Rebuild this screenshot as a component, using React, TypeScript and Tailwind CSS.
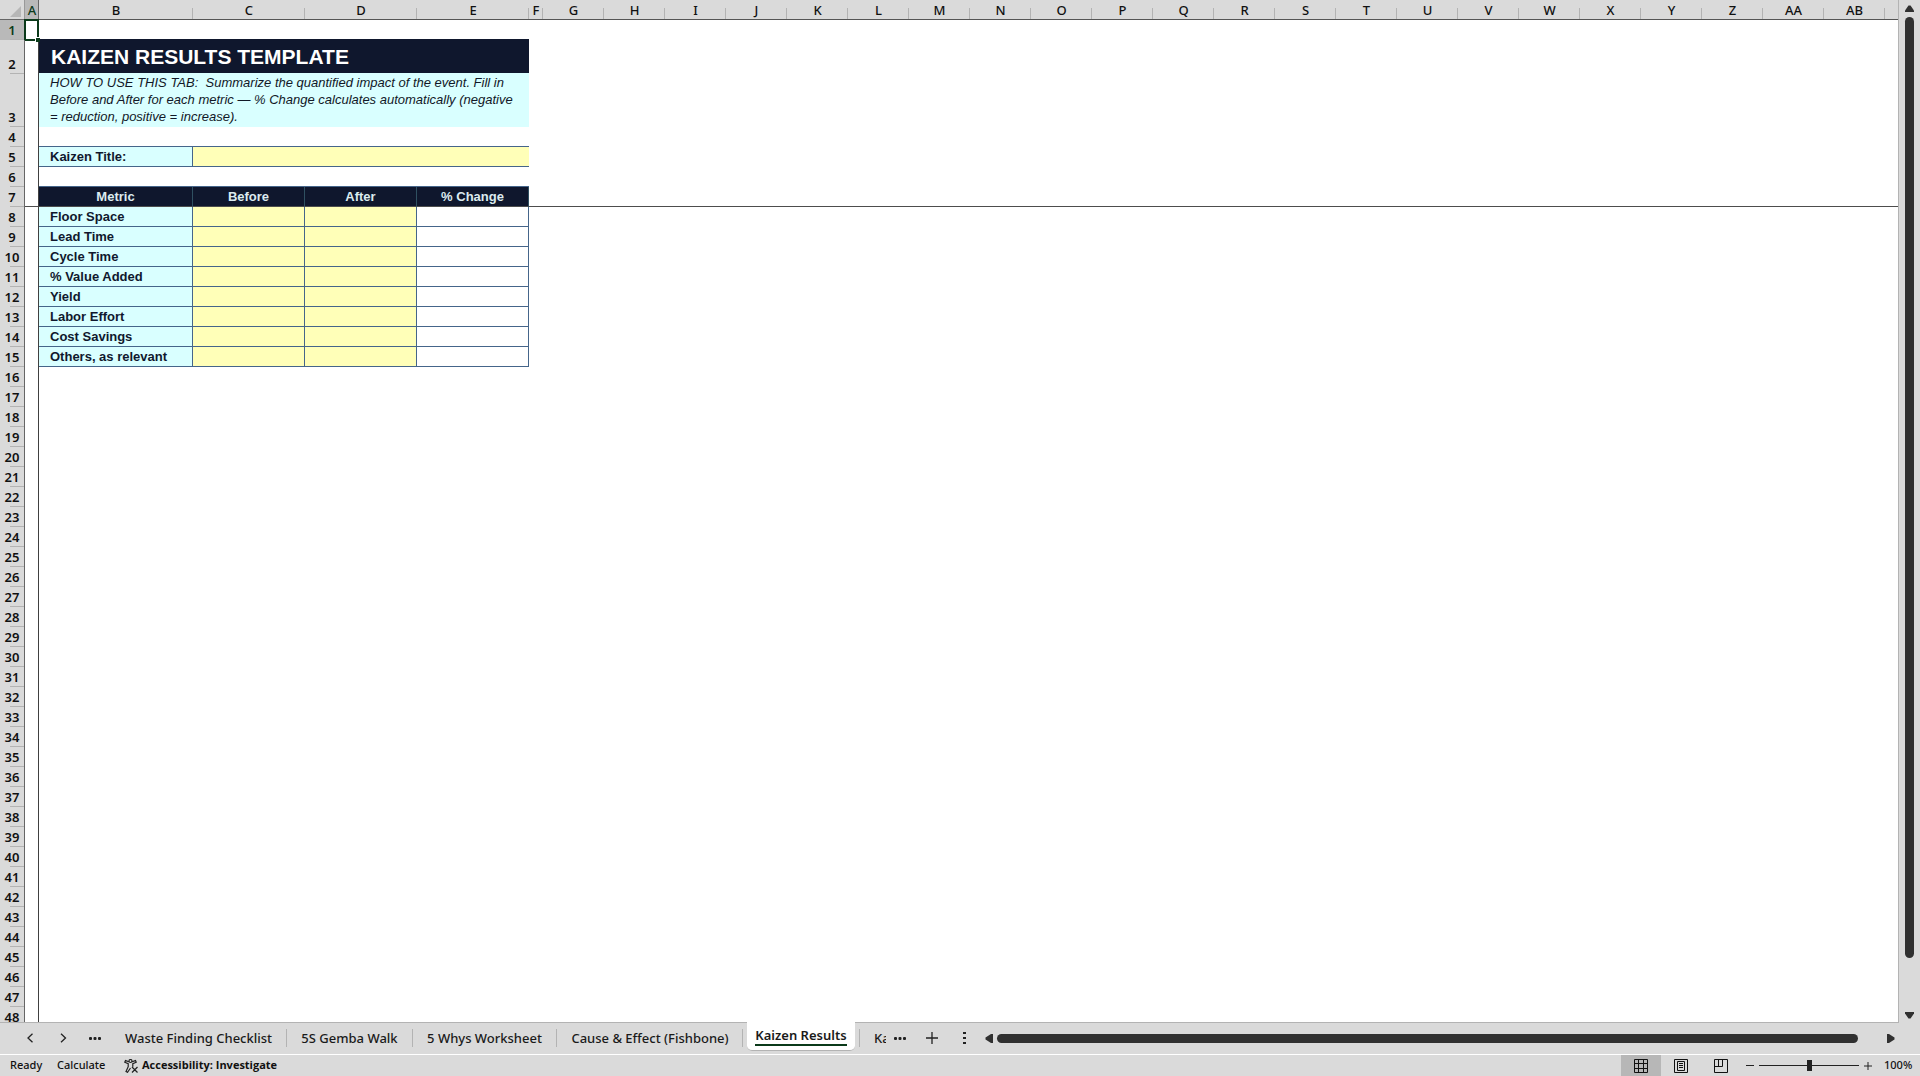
import React from 'react';

const LETTERS = ['A','B','C','D','E','F','G','H','I','J','K','L','M','N','O','P','Q','R','S','T','U','V','W','X','Y','Z','AA','AB'];
const METRICS = ['Floor Space','Lead Time','Cycle Time','% Value Added','Yield','Labor Effort','Cost Savings','Others, as relevant'];
const LINE = 'border-[#45658a]';

function colWidth(i: number) {
  if (i === 0) return 'w-[14px]';
  if (i === 1) return 'w-[154px]';
  if (i < 5) return 'w-[112px]';
  if (i === 5) return 'w-[14px]';
  return 'w-[61px]';
}

function rowHeight(n: number) {
  if (n === 2) return 'h-[34px]';
  if (n === 3) return 'h-[53px]';
  return 'h-5';
}

function RowHeader({ n }: { n: number }) {
  return (
    <th
      scope="row"
      className={`relative border-r border-[#666] p-0 align-bottom text-center text-[13px] leading-5 font-semibold ${n === 1 ? 'bg-[#b9b9b9] text-[#0b3a1a]' : 'bg-[#dadada] text-[#111]'}`}
    >
      {n}
      <span className="absolute right-0 bottom-0 h-px w-3.5 bg-[#b3b3b3]" />
    </th>
  );
}

function Entry({ label }: { label: string }) {
  return <input type="text" aria-label={label} className="block h-[19px] w-full bg-transparent px-1 text-[13px] outline-none" />;
}

function cells(n: number) {
  const label = `border-b ${LINE} bg-[#d9ffff] p-0 pl-[11px] text-left font-['Liberation_Sans',sans-serif] text-[13px] leading-[18px] font-bold text-[#10182e]`;
  if (n === 1) {
    return (
      <>
        <td colSpan={4} className="border-b border-[#0f172d] p-0" />
        <td colSpan={24} />
      </>
    );
  }
  if (n === 2) {
    return (
      <>
        <td colSpan={4} className="border-b border-[#d9ffff] bg-[#0f172d] p-0 pl-3 align-middle font-['Liberation_Sans',sans-serif] text-[21px] leading-6 font-bold text-white">
          KAIZEN RESULTS TEMPLATE
        </td>
        <td colSpan={24} />
      </>
    );
  }
  if (n === 3) {
    return (
      <>
        <td colSpan={4} className="bg-[#d9ffff] p-0 pl-[11px] align-top font-['Liberation_Sans',sans-serif] text-[13px] leading-[17px] whitespace-pre text-[#111827] italic">
          {'HOW TO USE THIS TAB:  Summarize the quantified impact of the event. Fill in\nBefore and After for each metric — % Change calculates automatically (negative\n= reduction, positive = increase).'}
        </td>
        <td colSpan={24} />
      </>
    );
  }
  if (n === 4 || n === 6) {
    return (
      <>
        <td colSpan={4} className={`border-b ${LINE} p-0`} />
        <td colSpan={24} />
      </>
    );
  }
  if (n === 5) {
    return (
      <>
        <th scope="row" className={`${label} border-r`}>Kaizen Title:</th>
        <td colSpan={3} className={`border-b ${LINE} bg-[#ffffb8] p-0`}><Entry label="Kaizen Title" /></td>
        <td colSpan={24} />
      </>
    );
  }
  if (n === 7) {
    return (
      <>
        {['Metric', 'Before', 'After', '% Change'].map((h) => (
          <th key={h} scope="col" className="border-r border-b border-r-[#2f5061] border-b-[#4d4d4d] bg-[#0f172d] p-0 text-center font-['Liberation_Sans',sans-serif] text-[13px] leading-[18px] font-bold text-[#dcebf0]">
            {h}
          </th>
        ))}
        <td colSpan={24} className="border-b border-[#4d4d4d] p-0" />
      </>
    );
  }
  if (n >= 8 && n <= 15) {
    const m = METRICS[n - 8];
    return (
      <>
        <th scope="row" className={`${label} border-r`}>{m}</th>
        <td className={`border-r border-b ${LINE} bg-[#ffffb8] p-0`}><Entry label={`${m} before`} /></td>
        <td className={`border-r border-b ${LINE} bg-[#ffffb8] p-0`}><Entry label={`${m} after`} /></td>
        <td className={`border-r border-b ${LINE} p-0`} />
        <td colSpan={24} />
      </>
    );
  }
  return <td colSpan={28} />;
}

function Sheet() {
  return (
    <div className="min-w-0 flex-1 overflow-hidden border-r border-b border-[#b3b3b3] bg-white">
      <table className="w-full table-fixed border-separate border-spacing-0">
        <colgroup>
          <col className="w-[25px]" />
          {LETTERS.map((l, i) => <col key={l} className={colWidth(i)} />)}
          <col />
        </colgroup>
        <thead>
          <tr className="h-5">
            <th className="border-r border-b border-[#666] border-r-[#999] bg-[#dadada] p-0">
              <svg viewBox="0 0 24 18" className="block h-[18px] w-6" aria-hidden="true"><path d="M21 5v11H10z" fill="#b7b7b7" /></svg>
            </th>
            {LETTERS.map((l, i) => (
              <th
                key={l}
                scope="col"
                className={`relative border-b border-[#555] p-0 pt-px text-center text-[13px] leading-[18px] font-medium ${i === 0 ? 'bg-[#b9b9b9] text-[#0b3a1a]' : 'bg-[#dadada] text-[#111]'}`}
              >
                {l}
                <span className={`absolute right-0 bottom-0 w-px ${i === 0 ? 'h-[19px] bg-[#666]' : 'h-[11px] bg-[#b3b3b3]'}`} />
              </th>
            ))}
            <th className="border-b border-[#555] bg-[#dadada] p-0" />
          </tr>
        </thead>
        <tbody>
          {Array.from({ length: 48 }, (_, k) => k + 1).map((n) => (
            <tr key={n} className={rowHeight(n)}>
              <RowHeader n={n} />
              <td className={`relative border-r border-[#404040] p-0 ${n === 7 ? 'border-b border-b-[#4d4d4d]' : ''}`}>
                {n === 1 && (
                  <>
                    <span className="absolute -top-px -right-px -bottom-px -left-px border-2 border-[#0b3a1a]" />
                    <span className="absolute -right-[2px] -bottom-[2px] z-10 size-[5px] border-t border-l border-white bg-[#0b3a1a]" />
                  </>
                )}
              </td>
              {cells(n)}
            </tr>
          ))}
        </tbody>
      </table>
    </div>
  );
}

function VerticalScroll() {
  return (
    <div className="flex w-[21px] flex-col items-center bg-[#dadada] pt-[5px] pb-1">
      <button aria-label="Scroll up"><svg viewBox="0 0 9 7" className="block h-[7px] w-[9px]"><path d="M3.5.5h2L9 5.5V7H0V5.5z" fill="#303030" /></svg></button>
      <div className="mt-[5px] w-[9px] flex-1 pb-[54px]"><div className="h-full rounded-full bg-[#303030]" /></div>
      <button aria-label="Scroll down"><svg viewBox="0 0 9 7" className="block h-[7px] w-[9px]"><path d="M3.5 6.5h2L9 1.5V0H0v1.5z" fill="#303030" /></svg></button>
    </div>
  );
}

function Dots({ vertical }: { vertical?: boolean }) {
  return vertical ? (
    <svg viewBox="0 0 3 12" className="h-3 w-[3px]" fill="#222"><path d="M0 0h3v2H0zM0 5h3v2H0zM0 10h3v2H0z" /></svg>
  ) : (
    <svg viewBox="0 0 12 3" className="h-[3px] w-3" fill="#222"><rect width="3" height="3" rx="1" /><rect x="4.5" width="3" height="3" rx="1" /><rect x="9" width="3" height="3" rx="1" /></svg>
  );
}

function Divider() {
  return <span className="h-[18px] w-px bg-[#b3b3b3]" />;
}

const TABS = [
  { name: 'Waste Finding Checklist', width: 'w-[147px]' },
  { name: '5S Gemba Walk', width: 'w-[97px]' },
  { name: '5 Whys Worksheet', width: 'w-[115px]' },
  { name: 'Cause & Effect (Fishbone)', width: 'w-[158px]' },
];

function TabBar() {
  const tab = 'text-[13px] leading-5 font-medium whitespace-nowrap text-[#1a1a1a]';
  return (
    <div className="flex h-[31px] items-center bg-[#dadada] pb-px">
      <button aria-label="Previous sheets" className="ml-[26px]"><svg viewBox="0 0 8 10" className="block h-2.5 w-2" fill="none" stroke="#222" strokeWidth="1.3"><path d="M6.5.8 2 5l4.5 4.2" /></svg></button>
      <button aria-label="Next sheets" className="ml-[26px]"><svg viewBox="0 0 8 10" className="block h-2.5 w-2" fill="none" stroke="#222" strokeWidth="1.3"><path d="M1 .8 5.5 5 1 9.2" /></svg></button>
      <button aria-label="More sheets" className="mr-6 ml-[21px] flex"><Dots /></button>
      <nav aria-label="Sheets" className="flex h-full items-center">
        {TABS.map((t, i) => (
          <React.Fragment key={t.name}>
            <button className={`${tab} ${t.width}`}>{t.name}</button>
            <span className={i === 3 ? 'w-[13px]' : 'w-[14px]'} />
            <Divider />
            {i < 3 && <span className="w-[14px]" />}
          </React.Fragment>
        ))}
        <button aria-current="page" className="relative mx-1 -mt-px h-[29px] w-[108px] self-start rounded-b-[5px] border-b border-[#b3b3b3] bg-white text-[13px] leading-[18px] font-semibold whitespace-nowrap text-[#1a1a1a]">
          <span className="inline-block border-b-2 border-[#0b3a1a]">Kaizen Results</span>
        </button>
        <Divider />
        <button className={`${tab} ml-[14px] w-3 overflow-hidden text-left`}>Ka</button>
      </nav>
      <button aria-label="All sheets" className="ml-2 flex"><Dots /></button>
      <button aria-label="Add sheet" className="ml-5"><svg viewBox="0 0 12 12" className="block size-3" stroke="#222" strokeWidth="1.3"><path d="M6 0v12M0 6h12" /></svg></button>
      <button aria-label="Resize tab bar" className="ml-[25px] flex"><Dots vertical /></button>
      <button aria-label="Scroll left" className="ml-[19px]"><svg viewBox="0 0 8 9" className="block h-[9px] w-2"><path d="M8 0H6L.5 3.5v2L6 9h2z" fill="#303030" /></svg></button>
      <div className="mx-1 h-[9px] flex-1 rounded-full bg-[#303030]" />
      <button aria-label="Scroll right" className="mr-[25px] ml-[25px]"><svg viewBox="0 0 8 9" className="block h-[9px] w-2"><path d="M0 0h2l5.5 3.5v2L2 9H0z" fill="#303030" /></svg></button>
    </div>
  );
}

function StatusBar() {
  return (
    <footer className="flex h-[22px] items-center border-t border-white bg-[#dadada] text-[11px] font-medium text-[#111]">
      <span className="ml-[10px] w-[31px] whitespace-nowrap">Ready</span>
      <span className="ml-4 w-[47px] whitespace-nowrap">Calculate</span>
      <button className="ml-5 flex items-center gap-1 font-['Open_Sans','Noto_Sans',sans-serif] font-bold whitespace-nowrap">
        <svg viewBox="0 0 14 14" className="size-3.5" fill="none" stroke="#222" strokeWidth="1.2"><circle cx="6.5" cy="2" r="1.5" /><path d="M5 2.8 1.5 1.6.8 3.2l3.4 1.5v3L2 12.5l1.5.8L6.5 9M8 2.8l3.5-1.2.7 1.6-3.4 1.5v3M8 8l5.5 5.5M13.5 8 8 13.5" /></svg>
        Accessibility: Investigate
      </button>
      <div className="ml-auto flex h-full items-center">
        <button aria-label="Normal view" className="flex h-full w-10 items-center justify-center bg-[#b7b7b7]">
          <svg viewBox="0 0 14 14" className="size-3.5" fill="none" stroke="#111"><path d="M.5.5h13v13H.5zM.5 4.5h13M.5 9.5h13M4.5.5v13M9.5.5v13" /></svg>
        </button>
        <button aria-label="Page layout view" className="flex h-full w-10 items-center justify-center">
          <svg viewBox="0 0 14 14" className="size-3.5" fill="none" stroke="#111"><path d="M.5.5h13v13H.5zM3.5 2.5h7v9h-7zM5 4.5h4M5 6.5h4M5 8.5h4" /></svg>
        </button>
        <button aria-label="Page break preview" className="flex h-full w-10 items-center justify-center">
          <svg viewBox="0 0 14 14" className="size-3.5" fill="none" stroke="#111"><path d="M.5.5h13v13H.5zM.5 7.5h8v-7M4.5.5v7" /></svg>
        </button>
        <button aria-label="Zoom out" className="ml-[5px] h-px w-2 bg-[#222]" />
        <input
          type="range"
          aria-label="Zoom"
          defaultValue={50}
          className="mx-[5px] h-[11px] w-[100px] appearance-none bg-[linear-gradient(#222,#222)] bg-[length:100%_1px] bg-center bg-no-repeat [&::-webkit-slider-thumb]:h-[11px] [&::-webkit-slider-thumb]:w-[5px] [&::-webkit-slider-thumb]:appearance-none [&::-webkit-slider-thumb]:bg-[#222]"
        />
        <button aria-label="Zoom in"><svg viewBox="0 0 8 8" className="block size-2" stroke="#222"><path d="M4 0v8M0 4h8" /></svg></button>
        <span className="mr-2 ml-3 w-7 text-right">100%</span>
      </div>
    </footer>
  );
}

export default function App() {
  return (
    <div className="flex h-screen flex-col overflow-hidden bg-[#dadada] font-['Noto_Sans','Open_Sans',sans-serif]">
      <main className="flex min-h-0 flex-1">
        <Sheet />
        <VerticalScroll />
      </main>
      <TabBar />
      <StatusBar />
    </div>
  );
}
